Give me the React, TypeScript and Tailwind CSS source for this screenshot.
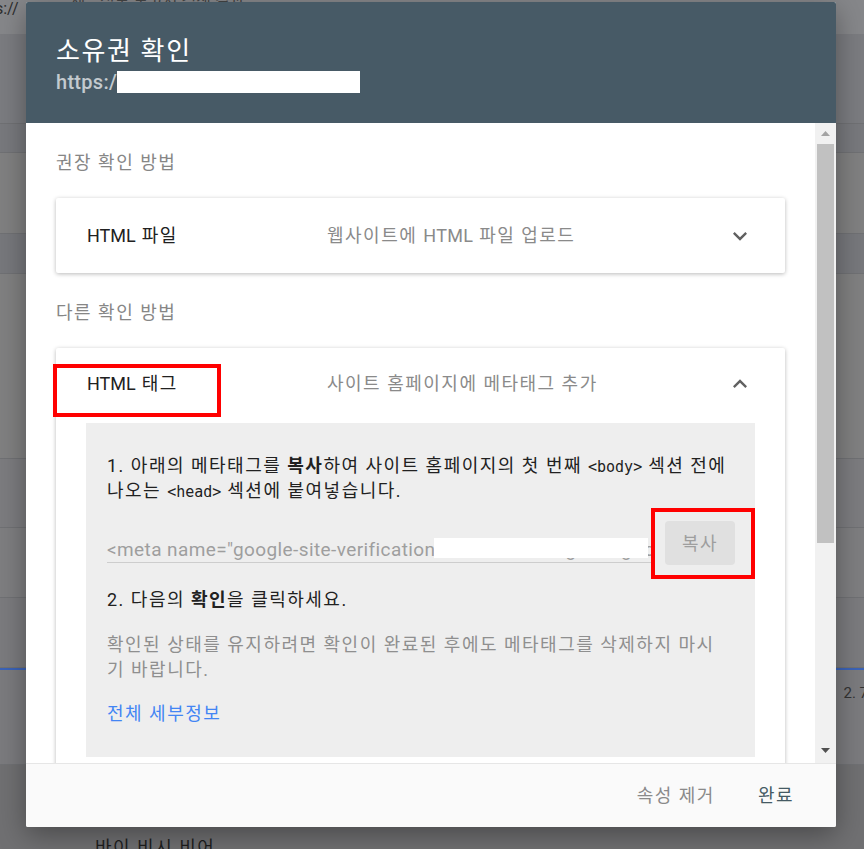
import React from "react";

const FONT = "font-[Roboto,'Noto_Sans_CJK_KR',sans-serif]";

function Chevron({ up }: { up?: boolean }) {
  return (
    <svg
      width="28"
      height="28"
      viewBox="0 0 24 24"
      className={up ? "rotate-180" : ""}
      fill="#616161"
    >
      <path d="M16.59 8.59L12 13.17 7.41 8.59 6 10l6 6 6-6z" />
    </svg>
  );
}

function Code({ children }: { children: React.ReactNode }) {
  return (
    <span className="font-['DejaVu_Sans_Mono',monospace] text-[15px] leading-none tracking-normal">
      {children}
    </span>
  );
}

// 배경 페이지 (모달 뒤)
function Backdrop() {
  const rows = [
    { h: "h-[90px]", bg: "bg-[#7b7c80]" },
    { h: "h-[29px]", bg: "bg-[#78797d]" },
    { h: "h-[81px]", bg: "bg-[#808081]" },
    { h: "h-[40px]", bg: "bg-[#77787c]" },
    { h: "h-[185px]", bg: "bg-[#808081]" },
    { h: "h-[69px]", bg: "bg-[#7c7c7f]" },
    { h: "h-[70px]", bg: "bg-[#7e7e80]" },
    { h: "h-[70px]", bg: "bg-[#7b7b7e]" },
  ];
  return (
    <div className="flex flex-col w-full h-full">
      <div className="h-[34px] bg-[#86878a] flex items-start gap-[52px] text-[16px] leading-[18px] text-[#2d2d2d]">
        <span className="ml-[-14px]">ps://</span>
        <span className="text-[#444] mt-[-8px]">세부정보 보고서 검색 결과</span>
      </div>
      {rows.map((r, i) => (
        <div
          key={i}
          className={`${r.h} ${r.bg} border-b border-[#707174] w-full`}
        />
      ))}
      <div className="h-[2px] bg-[#3b63b8] w-full" />
      <div className="h-[95px] bg-[#7b7b7e] border-b border-[#707174] flex justify-end items-start pt-[12px] text-[15px] text-[#333]">
        <span className="mr-[-8px]">2. 7.</span>
      </div>
      <div className="flex-1 bg-[#707072] flex items-end pl-[95px] text-[18px] text-[#1e1e1e] leading-[14px]">
        <span className="mb-[-6px] tracking-[1.5px]">바이 비시 비어</span>
      </div>
    </div>
  );
}

function Scrollbar() {
  return (
    <div className="w-[21px] bg-[#f1f1f1] flex flex-col items-center shrink-0">
      <div className="h-[21px] flex items-center justify-center">
        <svg width="9" height="5" viewBox="0 0 9 5">
          <path d="M0 5 L4.5 0 L9 5 Z" fill="#a3a3a3" />
        </svg>
      </div>
      <div className="w-[17px] h-[399px] bg-[#c1c1c1]" />
      <div className="flex-1" />
      <div className="h-[25px] flex items-center justify-center">
        <svg width="9" height="5" viewBox="0 0 9 5">
          <path d="M0 0 L9 0 L4.5 5 Z" fill="#505050" />
        </svg>
      </div>
    </div>
  );
}

export default function App() {
  return (
    <div
      className={`relative w-[864px] h-[849px] overflow-hidden bg-[#76777b] ${FONT}`}
    >
      <Backdrop />

      {/* 소유권 확인 모달 */}
      <div className="absolute left-[26px] top-[2px] w-[810px] h-[825px] flex flex-col bg-white rounded-[2px] overflow-hidden shadow-[0_8px_28px_rgba(0,0,0,0.35)]">
        <div className="h-[121px] bg-[#475a66] pl-[30px] pt-[34px] shrink-0">
          <h1 className="text-[26px] leading-[30px] tracking-[1.6px] text-white">
            소유권 확인
          </h1>
          <div className="mt-[5px] flex items-center h-[22px]">
            <span className="text-[20px] font-medium text-[#c3cacf] leading-[22px] tracking-[0.3px]">
              https:/
            </span>
            <div className="w-[243px] h-[22px] bg-white" />
          </div>
        </div>

        <div className="flex flex-1 min-h-0">
          <div className="flex-1 overflow-hidden px-[30px] pt-[28px] text-[18px] tracking-[1.5px]">
            {/* 권장 확인 방법 */}
            <h2 className="leading-[24px] text-[#868686]">권장 확인 방법</h2>
            <div className="mt-[23px] h-[75px] bg-white rounded-[2px] shadow-[0_1px_4px_rgba(0,0,0,0.28)] flex items-center pl-[31px] pr-[31px]">
              <div className="w-[240px] text-[#212121]">
                <span className="tracking-normal">HTML</span> 파일
              </div>
              <div className="flex-1 text-[#8a8a8a]">
                웹사이트에 <span className="tracking-[0.3px]">HTML</span> 파일
                업로드
              </div>
              <Chevron />
            </div>

            {/* 다른 확인 방법 */}
            <h2 className="mt-[28px] leading-[24px] text-[#868686]">
              다른 확인 방법
            </h2>
            <div className="mt-[23px] bg-white rounded-[2px] shadow-[0_1px_4px_rgba(0,0,0,0.28)] pb-[20px]">
              <div className="h-[75px] flex items-center pl-[31px] pr-[31px] pb-[4px]">
                <div className="w-[240px] text-[#212121]">
                  <span className="tracking-normal">HTML</span> 태그
                </div>
                <div className="flex-1 text-[#8a8a8a]">
                  사이트 홈페이지에 메타태그 추가
                </div>
                <Chevron up />
              </div>

              <div className="mx-[30px] bg-[#eeeeee] pt-[30px] pl-[21px] pr-[20px] pb-[31px]">
                <p className="leading-[25px] text-[#212121]">
                  <span className="block whitespace-nowrap">
                    1. 아래의 메타태그를 <b className="font-bold">복사</b>하여
                    사이트 홈페이지의 첫 번째 <Code>&lt;body&gt;</Code> 섹션
                    전에
                  </span>
                  <span className="block whitespace-nowrap">
                    나오는 <Code>&lt;head&gt;</Code> 섹션에 붙여넣습니다.
                  </span>
                </p>

                <div className="mt-[18px] flex items-end gap-[10px]">
                  <div className="flex-1 mb-[2px] h-[25px] border-b border-[#cdcdcd] overflow-hidden whitespace-nowrap leading-[24px] text-[19px] text-[#9e9e9e] tracking-[0.4px]">
                    <span>&lt;meta name="google-site-verification</span>
                    <span className="relative">
                      " content="Qe7gUz4ngKq1gHw0tXbq
                      <span className="absolute left-0 top-0 w-[214px] h-[20px] bg-white" />
                    </span>
                  </div>
                  <button className="w-[70px] h-[44px] bg-[#e0e0e0] rounded-[4px] text-[#9e9e9e] shrink-0">
                    복사
                  </button>
                </div>

                <p className="mt-[23px] leading-[24px] text-[#212121]">
                  2. 다음의 <b className="font-bold">확인</b>을 클릭하세요.
                </p>

                <p className="mt-[20px] leading-[25px] text-[#8f8f8f]">
                  <span className="block whitespace-nowrap">
                    확인된 상태를 유지하려면 확인이 완료된 후에도 메타태그를
                    삭제하지 마시
                  </span>
                  <span className="block">기 바랍니다.</span>
                </p>

                <a className="block mt-[20px] leading-[24px] text-[#4285f4]">
                  전체 세부정보
                </a>
              </div>
            </div>
          </div>
          <Scrollbar />
        </div>

        <div className="h-[64px] shrink-0 border-t border-[#e6e6e6] bg-[#fafafa] flex justify-end items-center gap-[43px] pr-[42px] text-[18px] tracking-[1.5px]">
          <button className="text-[#8a8a8a]">속성 제거</button>
          <button className="text-[#455a64]">완료</button>
        </div>
      </div>

      {/* 빨간 표시 */}
      <div className="absolute left-[53px] top-[364px] w-[168px] h-[53px] border-4 border-[#ff0000]" />
      <div className="absolute left-[651px] top-[508px] w-[104px] h-[71px] border-4 border-[#ff0000]" />
    </div>
  );
}
